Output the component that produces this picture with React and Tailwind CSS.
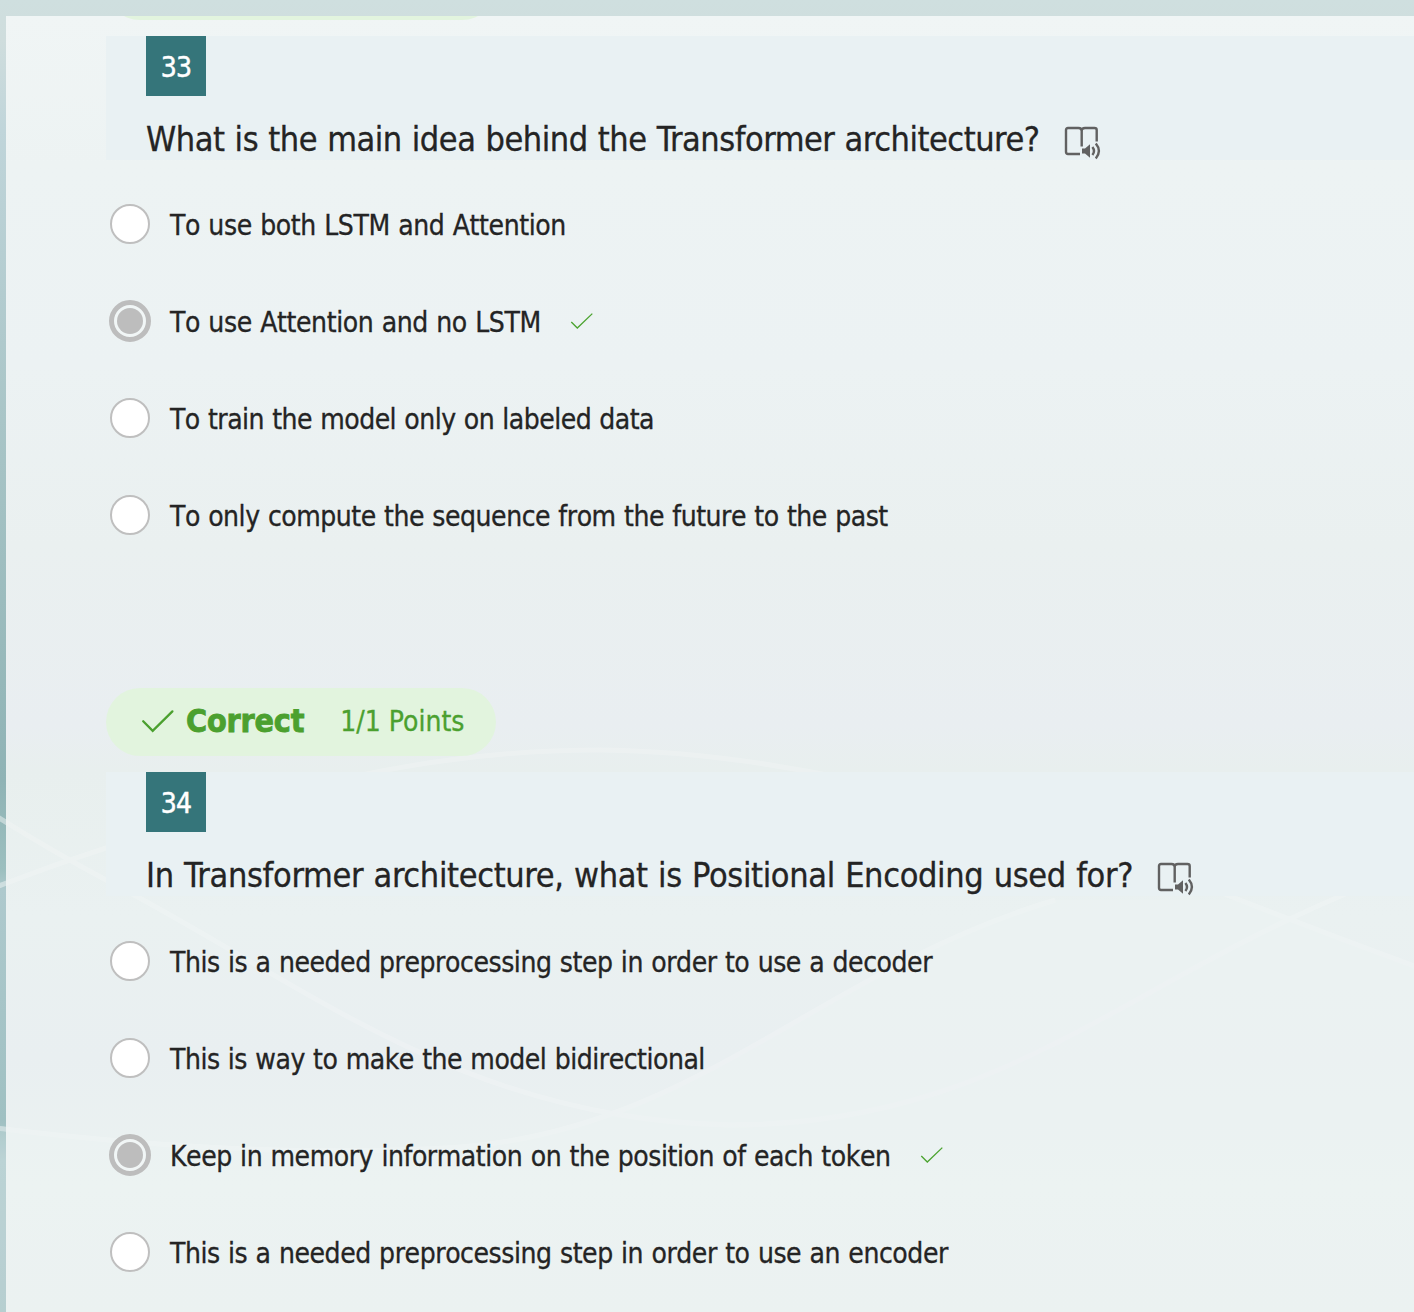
const FONT = "font-['DejaVu_Sans_Condensed','Liberation_Sans',sans-serif]";

const questions = [
  {
    number: 33,
    title: "What is the main idea behind the Transformer architecture?",
    tracking: "tracking-[-0.475px]",
    listPadding: "pt-[15px]",
    options: [
      { text: "To use both LSTM and Attention", tracking: "tracking-[-0.39px]" },
      { text: "To use Attention and no LSTM", tracking: "tracking-[-0.39px]", chosen: true },
      { text: "To train the model only on labeled data", tracking: "tracking-[-0.52px]" },
      { text: "To only compute the sequence from the future to the past", tracking: "tracking-[-0.46px]" },
    ],
  },
  {
    number: 34,
    title: "In Transformer architecture, what is Positional Encoding used for?",
    tracking: "tracking-[-0.34px]",
    listPadding: "pt-4",
    options: [
      { text: "This is a needed preprocessing step in order to use a decoder", tracking: "tracking-[-0.44px]" },
      { text: "This is way to make the model bidirectional", tracking: "tracking-[-0.475px]" },
      { text: "Keep in memory information on the position of each token", tracking: "tracking-[-0.44px]", chosen: true },
      { text: "This is a needed preprocessing step in order to use an encoder", tracking: "tracking-[-0.435px]" },
    ],
  },
];

function ReaderIcon() {
  return (
    <svg width="38" height="34" viewBox="0 0 38 34" fill="none" stroke="#616161" strokeWidth="2.4" className="shrink-0">
      <path d="M16 28H4Q2 28 2 26V4Q2 2 4 2H14.5Q17.7 2 17.7 5Q17.7 2 21 2H30.5Q32.7 2 32.7 4V15.5M17.7 4V20.5" />
      <path d="M18 22.6h3l5-4.4v13.6l-5-4.4h-3z" fill="#616161" stroke="none" />
      <path d="M28.4 21Q31.6 25 28.4 29M31.8 17.6Q38 25 31.8 32.4" />
    </svg>
  );
}

function Radio({ chosen }) {
  if (chosen) {
    return (
      <span className="-mx-px flex size-[42px] shrink-0 items-center justify-center rounded-full border-[5px] border-[#bdbdbd] bg-[#f1f6f6]">
        <span className="size-[26px] rounded-full bg-[#bdbdbd]" />
      </span>
    );
  }
  return <span className="size-10 shrink-0 rounded-full border-2 border-[#bfbfbf] bg-white" />;
}

function Option({ text, tracking, chosen }) {
  return (
    <li className="flex h-[97px] items-center pl-1">
      <Radio chosen={chosen} />
      <span className={`ml-5 pt-[5px] text-[28px] leading-[34px] whitespace-nowrap [font-kerning:none] [word-spacing:0.75px] [-webkit-text-stroke:0.3px_currentColor] ${tracking}`}>{text}</span>
      {chosen && (
        <svg width="24" height="18" viewBox="0 0 24 18" fill="none" stroke="#4ba32f" strokeWidth="1.3" className="ml-[29px]">
          <path d="M1.3 10L7.3 16L22.3 1.6" />
        </svg>
      )}
    </li>
  );
}

function Question({ number, title, tracking, listPadding, options }) {
  return (
    <section>
      <header className="h-[124px] bg-[#e9f1f3] pl-10">
        <div className="flex size-[60px] items-center justify-center bg-[#35757a] pt-1 text-[28px] tracking-[-0.8px] text-white [-webkit-text-stroke:0.5px_currentColor]">{number}</div>
        <div className="flex pt-[22px]">
          <h2 className={`text-[34px] leading-[42px] whitespace-nowrap [word-spacing:0.9px] [-webkit-text-stroke:0.3px_currentColor] ${tracking}`}>{title}</h2>
          <span className="ml-[24px] pt-2">
            <ReaderIcon />
          </span>
        </div>
      </header>
      <ul className={listPadding}>
        {options.map((o) => (
          <Option key={o.text} {...o} />
        ))}
      </ul>
    </section>
  );
}

function Waves({ className, fillOpacity }) {
  return (
    <svg className={`absolute inset-y-0 left-0 ${className}`} height="1312" fill="none">
      <path d="M0 1128Q260 1160 460 1147C700 1128 820 970 1055 900H1240Q1320 930 1414 965V1312H0Z" fill="#f8fffc" fillOpacity={fillOpacity} />
      <g stroke="#ffffff" strokeWidth="5">
        <path d="M-4 816Q50 850 106 880C300 980 460 1120 730 1125C1000 1125 1120 985 1360 888" />
        <path d="M-4 887Q50 866 106 848C280 790 420 750 600 750C820 752 1060 830 1240 900Q1330 935 1420 968" />
        <path d="M-4 1128Q260 1160 460 1147C700 1128 820 970 1055 900" />
      </g>
    </svg>
  );
}

export default function App() {
  return (
    <div className={`relative h-[1312px] w-[1414px] overflow-hidden bg-[linear-gradient(180deg,#cfdfdf_0px,#cfdddd_40px,#c0d5da_130px,#a9c5c7_420px,#8fb3b5_780px,#9cbfbf_870px,#aec9cd_890px,#9fc0c2_1120px,#b3cdd0_1160px,#adc8ca_1312px)] pt-4 pl-1.5 text-[#242424] antialiased ${FONT}`}>
      <Waves className="w-1.5 opacity-30" fillOpacity="0" />
      <main className="h-[1296px] overflow-hidden bg-[linear-gradient(180deg,#f0f5f5_0px,#edf3f3_150px,#ecf2f3_350px,#eaf0f0_530px,#e9eef1_710px,#e8efee_755px,#eaf1f1_900px,#e9eff1_1040px,#ebf2f1_1170px,#eaf0f0_1296px)] pl-[100px]">
        <Waves className="w-[1414px] opacity-[0.18]" fillOpacity="0.7" />
        <div className="relative">
          <div className="-mt-16 mb-4 h-[68px] w-[390px] rounded-full bg-[#e2f4de]" />
          <Question {...questions[0]} />
          <div className="mt-[125px] mb-4 flex h-[68px] w-[390px] items-center rounded-full bg-[#e2f4de] pb-[3px] pl-[35px] text-[#4ba02f]">
            <svg width="34" height="26" viewBox="0 0 34 26" fill="none" stroke="currentColor" strokeWidth="2.3" className="shrink-0">
              <path d="M2.2 13.2L11.7 22.8L31.4 3.4" strokeLinecap="round" />
            </svg>
            <span className="ml-[11px] text-[32px] leading-10 font-bold tracking-[-0.2px] [-webkit-text-stroke:0.8px_currentColor]">Correct</span>
            <span className="ml-9 pt-0.5 text-[28px] leading-10 whitespace-nowrap [-webkit-text-stroke:0.3px_currentColor]">1/1 Points</span>
          </div>
          <Question {...questions[1]} />
        </div>
      </main>
    </div>
  );
}
